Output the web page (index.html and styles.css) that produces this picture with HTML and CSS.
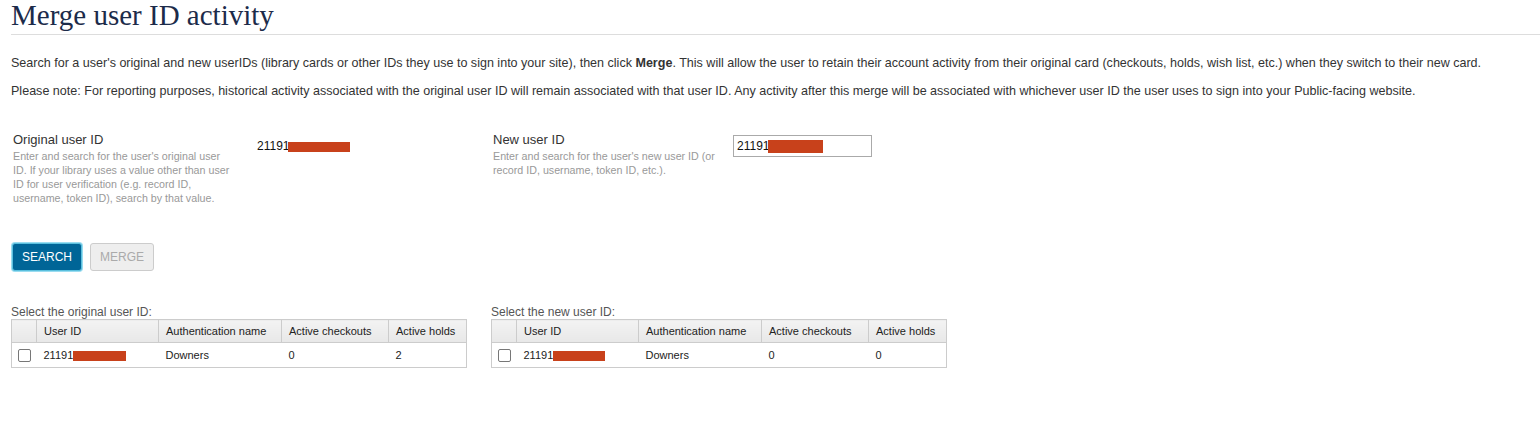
FILE: index.html
```html
<!DOCTYPE html>
<html>
<head>
<meta charset="utf-8">
<link rel="stylesheet" href="styles.css">
</head>
<body>
<div class="page">
  <h1 class="title">Merge user ID activity</h1>
  <p class="intro">Search for a user's original and new userIDs (library cards or other IDs they use to sign into your site), then click <b>Merge</b>. This will allow the user to retain their account activity from their original card (checkouts, holds, wish list, etc.) when they switch to their new card.</p>
  <p class="intro">Please note: For reporting purposes, historical activity associated with the original user ID will remain associated with that user ID. Any activity after this merge will be associated with whichever user ID the user uses to sign into your Public-facing website.</p>

  <div class="fields">
    <div class="field">
      <div class="field-label">
        <div class="label">Original user ID</div>
        <div class="help help-narrow">Enter and search for the user's original user ID. If your library uses a value other than user ID for user verification (e.g. record ID, username, token ID), search by that value.</div>
      </div>
      <div class="field-value"><span class="value-text">21191<span class="redact r1"></span></span></div>
    </div>
    <div class="field">
      <div class="field-label">
        <div class="label">New user ID</div>
        <div class="help help-wide">Enter and search for the user's new user ID (or record ID, username, token ID, etc.).</div>
      </div>
      <div class="field-value"><div class="input">21191<span class="redact r2"></span></div></div>
    </div>
  </div>

  <div class="buttons">
    <button class="btn btn-primary">SEARCH</button>
    <button class="btn btn-disabled">MERGE</button>
  </div>

  <div class="tables">
    <div class="tbl-wrap">
      <div class="tbl-caption">Select the original user ID:</div>
      <table class="grid">
        <thead>
          <tr><th class="c-check"></th><th class="c-id">User ID</th><th class="c-auth">Authentication name</th><th class="c-co">Active checkouts</th><th class="c-holds">Active holds</th></tr>
        </thead>
        <tbody>
          <tr><td class="c-check"><span class="checkbox"></span></td><td>21191<span class="redact r3"></span></td><td>Downers</td><td>0</td><td>2</td></tr>
        </tbody>
      </table>
    </div>
    <div class="tbl-wrap">
      <div class="tbl-caption">Select the new user ID:</div>
      <table class="grid">
        <thead>
          <tr><th class="c-check"></th><th class="c-id">User ID</th><th class="c-auth">Authentication name</th><th class="c-co">Active checkouts</th><th class="c-holds">Active holds</th></tr>
        </thead>
        <tbody>
          <tr><td class="c-check"><span class="checkbox"></span></td><td>21191<span class="redact r4"></span></td><td>Downers</td><td>0</td><td>0</td></tr>
        </tbody>
      </table>
    </div>
  </div>
</div>
</body>
</html>
```
FILE: styles.css
```css
html, body {
  margin: 0;
  padding: 0;
  background: #fff;
}
.page {
  padding-left: 11px;
  font-family: "Liberation Sans", Arial, sans-serif;
  font-size: 12px;
  color: #333;
}
.title {
  margin: 0;
  padding: 0 0 4px 0;
  font-family: "Liberation Serif", "Times New Roman", serif;
  font-weight: normal;
  font-size: 29px;
  line-height: 30px;
  color: #1c2b4a;
  border-bottom: 1px solid #ddd;
}
.intro {
  margin: 19px 0 0 0;
  font-size: 12.55px;
  line-height: 18px;
}
.intro + .intro {
  margin-top: 10px;
}
.fields {
  display: flex;
  margin-top: 32px;
  padding-left: 2px;
}
.field {
  display: flex;
  width: 480px;
}
.field-label {
  width: 244px;
}
.label {
  font-size: 13px;
  line-height: 16px;
  color: #333;
}
.help {
  font-size: 10.7px;
  line-height: 14px;
  color: #999;
  margin-top: 1px;
}
.help-narrow {
  width: 220px;
}
.help-wide {
  width: 230px;
}
.field-value {
  padding-top: 1px;
}
.value-text {
  font-size: 12px;
  color: #111;
  line-height: 16px;
  display: inline-block;
  padding-top: 5px;
}
.input {
  width: 134px;
  height: 20px;
  border: 1px solid #aaa;
  font-size: 12px;
  line-height: 20px;
  padding-left: 3px;
  color: #111;
  margin-top: 2px;
  margin-left: -4px;
}
.redact {
  display: inline-block;
  background: #c8411b;
  vertical-align: middle;
  height: 10px;
}
.r1 { width: 62px; margin-left: -1px; }
.r2 { width: 55px; margin-left: -1px; height: 13px; }
.r3 { width: 53px; margin-left: 0; }
.r4 { width: 52px; margin-left: 0; }
.buttons {
  display: flex;
  gap: 8px;
  margin-top: 38px;
  padding-left: 1px;
}
.btn {
  font-family: "Liberation Sans", Arial, sans-serif;
  font-size: 12px;
  height: 28px;
  padding: 0 9px;
  border-radius: 3px;
  cursor: default;
}
.btn-primary {
  background: #006597;
  color: #fff;
  border: 1px solid #5bc0de;
  box-shadow: 0 0 0 1px #9adcf0;
}
.btn-disabled {
  background: #eee;
  color: #aaa;
  border: 1px solid #ccc;
}
.tables {
  display: flex;
  gap: 24px;
  margin-top: 34px;
}
.tbl-caption {
  font-size: 12px;
  line-height: 14px;
  color: #555;
  margin-bottom: 0;
}
.grid {
  border-collapse: collapse;
  table-layout: fixed;
  font-family: "Liberation Sans", Tahoma, sans-serif;
  font-size: 11px;
  color: #222;
  border: 1px solid #ccc;
  width: 455px;
}
.grid th,
.grid td {
  box-sizing: border-box;
  white-space: nowrap;
}
.grid th {
  font-weight: normal;
  text-align: left;
  background: linear-gradient(#f3f3f3, #e8e8e8);
  border: 1px solid #ccc;
  height: 23px;
  padding: 0 7px;
}
.grid td {
  height: 25px;
  padding: 0 7px;
  border: none;
}
.grid .c-check { width: 25px; padding: 0 0 0 6px; }
.grid th.c-id { width: 122px; }
.grid th.c-auth { width: 123px; }
.grid th.c-co { width: 107px; }
.grid th.c-holds { width: 78px; }
.checkbox {
  display: inline-block;
  width: 11px;
  height: 11px;
  border: 1px solid #777;
  border-radius: 2px;
  vertical-align: middle;
  background: #fff;
}
```
